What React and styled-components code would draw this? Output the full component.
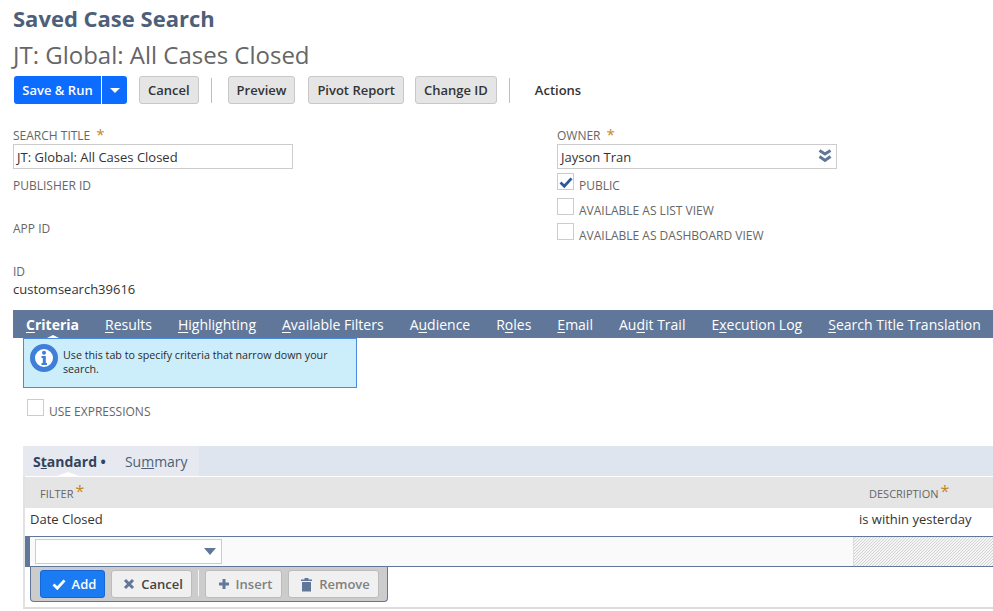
import React from 'react';
import styled, { createGlobalStyle } from 'styled-components';

const Global = createGlobalStyle`
  html, body { margin: 0; padding: 0; background: #fff; overflow: hidden; }
  body { font-family: "Open Sans", "Noto Sans", sans-serif; font-size: 13px; color: #333; }
`;

const Page = styled.div`
  width: 993px;
  height: 611px;
  overflow: hidden;
  padding: 3px 0 0 13px;
  box-sizing: border-box;
`;

const Title = styled.h1`
  margin: 0;
  font-size: 22px;
  line-height: 30px;
  font-weight: 700;
  color: #4d5f79;
`;

const SubTitle = styled.h2`
  margin: 5px 0 0;
  font-size: 24px;
  line-height: 33px;
  font-weight: 400;
  color: #666;
`;

const Toolbar = styled.div`
  display: flex;
  align-items: center;
  height: 28px;
  margin: 5px 0 0 1px;
`;

const PrimaryGroup = styled.div`
  display: flex;
  height: 28px;
  border-radius: 3px;
  overflow: hidden;
  background: #0b6cff;
  color: #fff;
  font-weight: 600;
  margin-right: 12px;
`;

const PrimaryLabel = styled.div`
  width: 88px;
  box-sizing: border-box;
  text-align: center;
  line-height: 28px;
  border-right: 1px solid #fff;
`;

const PrimaryArrow = styled.div`
  width: 25px;
  display: flex;
  align-items: center;
  justify-content: center;
  &::after {
    content: '';
    border: 5px solid transparent;
    border-top: 5px solid #fff;
    border-bottom: 0;
  }
`;

const Button = styled.div`
  height: 26px;
  line-height: 26px;
  padding: 0 8px;
  background: #e5e5e5;
  border: 1px solid #c8c8c8;
  border-radius: 3px;
  font-weight: 600;
  color: #333;
  margin-right: ${p => p.$gap || 12}px;
`;

const Divider = styled.div`
  width: 1px;
  height: 25px;
  background: #bdbdbd;
  margin-right: 16px;
`;

const PlainAction = styled.div`
  font-weight: 600;
  margin-left: 9px;
  color: #333;
`;

const Form = styled.div`
  display: grid;
  grid-template-columns: 544px 280px;
  margin-top: 23px;
`;

const Column = styled.div`
  display: flex;
  flex-direction: column;
`;

const Label = styled.div`
  font-size: 12px;
  line-height: 17px;
  height: 17px;
  color: #666;
  white-space: nowrap;
`;

const FieldLabel = styled(Label)`
  margin-top: 8px;
`;

const Star = styled.span`
  color: #c5861f;
  font-size: 15px;
  line-height: 1;
  margin-left: 6px;
`;

const TextBox = styled.div`
  width: 280px;
  height: 25px;
  box-sizing: border-box;
  border: 1px solid #ccc;
  padding-left: 3px;
  line-height: 25px;
  color: #333;
  position: relative;
`;

const OwnerArrows = styled.svg`
  position: absolute;
  right: 4px;
  top: 4px;
  width: 14px;
  height: 14px;
`;

const FieldBlock = styled.div`
  height: 43px;
`;

const Value = styled.div`
  line-height: 18px;
`;

const CheckRow = styled.div`
  display: flex;
  align-items: flex-start;
  height: 25px;
  gap: 5px;
  ${p => p.$first && 'margin-top: 4px;'}
`;

const Box = styled.div`
  width: 17px;
  height: 17px;
  box-sizing: border-box;
  border: 1px solid #ccc;
  flex: none;
  display: flex;
  align-items: center;
  justify-content: center;
`;

const CheckLabel = styled(Label)`
  margin-top: 4px;
`;

const TabBar = styled.div`
  display: flex;
  height: 28px;
  margin-top: 12px;
  background: #607799;
  padding-left: 13px;
  gap: 26px;
  white-space: nowrap;
`;

const Tab = styled.div`
  position: relative;
  color: #fff;
  font-size: 14px;
  line-height: 29px;
  font-weight: ${p => (p.$active ? 700 : 400)};
  u { text-underline-offset: 2px; }
  ${p => p.$active && `
    &::after {
      content: '';
      position: absolute;
      left: 50%;
      bottom: 0;
      margin-left: -6px;
      border: 6px solid transparent;
      border-top: 0;
      border-bottom: 3px solid #fff;
    }
  `}
`;

const InfoBox = styled.div`
  width: 334px;
  height: 50px;
  box-sizing: border-box;
  margin-left: 10px;
  background: #cceefb;
  border: 1px solid #4a8ae0;
  display: flex;
  padding: 5px 6px;
  gap: 5px;
  font-size: 10.7px;
  line-height: 14px;
  color: #2b2b2b;
`;

const InfoIcon = styled.svg`
  flex: none;
  width: 28px;
  height: 28px;
`;

const InfoText = styled.div`
  margin-top: 4px;
`;

const ExprRow = styled(CheckRow)`
  margin: 11px 0 0 14px;
`;

const Panel = styled.div`
  margin: 22px 0 0 10px;
  border-left: 2px solid #e2e2e2;
  border-bottom: 2px solid #ddd;
  height: 161px;
`;

const SubTabs = styled.div`
  display: flex;
  height: 30px;
  margin-left: -2px;
  background: #dfe5ef;
`;

const SubTab = styled.div`
  position: relative;
  background: #e6e9f0;
  width: 176px;
  display: flex;
  align-items: center;
  padding-left: 10px;
  gap: 19px;
  box-sizing: border-box;
  font-size: 14px;
  line-height: 31px;
  color: #4d5f79;
  b { color: #33435c; }
  &::after {
    content: '';
    position: absolute;
    left: 34px;
    bottom: 0;
    border: 11px solid transparent;
    border-top: 0;
    border-bottom: 4px solid #fff;
  }
`;

const HeadRow = styled.div`
  display: grid;
  grid-template-columns: 828px 1fr;
  height: 31px;
  background: #e5e5e5;
  margin-top: 1px;
  font-size: 11px;
  color: #666;
  line-height: 33px;
`;

const HeadCell = styled.div`
  padding-left: ${p => p.$pad}px;
  white-space: nowrap;
`;

const HeadStar = styled.span`
  color: #c5861f;
  font-size: 16px;
  margin-left: 2px;
  vertical-align: 1px;
  line-height: 1;
`;

const DataRow = styled.div`
  display: grid;
  grid-template-columns: 829px 1fr;
  height: 28px;
  line-height: 22px;
  box-sizing: border-box;
  padding-left: 5px;
  white-space: nowrap;
  color: #333;
`;

const EditRow = styled.div`
  display: grid;
  grid-template-columns: 823px 1fr;
  height: 31px;
  box-sizing: border-box;
  background: #fafafa;
  border-top: 1px solid #607799;
  border-bottom: 1px solid #607799;
  border-left: 5px solid #607799;
`;

const EditCell = styled.div`
  padding: 2px 0 0 5px;
`;

const Hatch = styled.div`
  border-left: 1px solid #ddd;
  background-image: linear-gradient(135deg, #f5f5f5 25%, #d2d2d2 25% 50%, #f5f5f5 50% 75%, #d2d2d2 75%);
  background-size: 3px 3px;
`;

const Select = styled.div`
  position: relative;
  width: 187px;
  height: 25px;
  box-sizing: border-box;
  background: #fff;
  border: 1px solid #ccc;
  &::after {
    content: '';
    position: absolute;
    right: 5px;
    top: 8px;
    border: 6px solid transparent;
    border-top: 7px solid #607799;
    border-bottom: 0;
  }
`;

const ActionBar = styled.div`
  display: flex;
  align-items: flex-start;
  width: 358px;
  height: 35px;
  box-sizing: border-box;
  margin-left: 5px;
  background: #ccc;
  border: 1px solid #607799;
  border-top: 0;
  border-radius: 0 0 4px 4px;
  padding: 3px 0 0 9px;
  gap: 6px;
`;

const RowButton = styled.div`
  display: flex;
  align-items: center;
  justify-content: center;
  gap: 6px;
  width: ${p => p.$w}px;
  height: 28px;
  padding-left: 3px;
  box-sizing: border-box;
  border-radius: 3px;
  font-weight: 600;
  border: 1px solid ${p => (p.$primary ? '#1467d8' : '#bbb')};
  background: ${p => (p.$primary ? '#1a7bf2' : '#f0f0f0')};
  color: ${p => (p.$primary ? '#fff' : p.$muted ? '#808080' : '#444')};
`;

const BarDivider = styled.div`
  width: 1px;
  height: 26px;
  background: #f4f4f4;
`;

const Check = ({ color, size = 14 }) => (
  <svg width={size} height={size} viewBox="0 0 14 14">
    <path d="M1.5 7.5 L5.3 11.2 L12.5 3.4" fill="none" stroke={color} strokeWidth="2.8" />
  </svg>
);

const tabs = [
  ['', 'C', 'riteria'],
  ['', 'R', 'esults'],
  ['', 'H', 'ighlighting'],
  ['', 'A', 'vailable Filters'],
  ['A', 'u', 'dience'],
  ['R', 'o', 'les'],
  ['', 'E', 'mail'],
  ['Au', 'd', 'it Trail'],
  ['E', 'x', 'ecution Log'],
  ['', 'S', 'earch Title Translation'],
];

export default function App() {
  return (
    <Page>
      <Global />
      <Title>Saved Case Search</Title>
      <SubTitle>JT: Global: All Cases Closed</SubTitle>
      <Toolbar>
        <PrimaryGroup>
          <PrimaryLabel>Save &amp; Run</PrimaryLabel>
          <PrimaryArrow />
        </PrimaryGroup>
        <Button>Cancel</Button>
        <Divider />
        <Button $gap={13}>Preview</Button>
        <Button $gap={11}>Pivot Report</Button>
        <Button>Change ID</Button>
        <Divider />
        <PlainAction>Actions</PlainAction>
      </Toolbar>

      <Form>
        <Column>
          <Label>SEARCH TITLE<Star>*</Star></Label>
          <TextBox>JT: Global: All Cases Closed</TextBox>
          <FieldBlock>
            <FieldLabel>PUBLISHER ID</FieldLabel>
          </FieldBlock>
          <FieldBlock>
            <FieldLabel>APP ID</FieldLabel>
          </FieldBlock>
          <FieldLabel>ID</FieldLabel>
          <Value>customsearch39616</Value>
        </Column>
        <Column>
          <Label>OWNER<Star>*</Star></Label>
          <TextBox>
            Jayson Tran
            <OwnerArrows viewBox="0 0 14 14">
              <path d="M1.5 1.5 L7 5 L12.5 1.5 M1.5 7.5 L7 11.5 L12.5 7.5" fill="none" stroke="#607799" strokeWidth="3" />
            </OwnerArrows>
          </TextBox>
          <CheckRow $first>
            <Box><Check color="#2a5a9e" /></Box>
            <CheckLabel>PUBLIC</CheckLabel>
          </CheckRow>
          <CheckRow>
            <Box />
            <CheckLabel>AVAILABLE AS LIST VIEW</CheckLabel>
          </CheckRow>
          <CheckRow>
            <Box />
            <CheckLabel>AVAILABLE AS DASHBOARD VIEW</CheckLabel>
          </CheckRow>
        </Column>
      </Form>

      <TabBar>
        {tabs.map(([pre, key, rest], i) => (
          <Tab key={key + rest} $active={i === 0}>{pre}<u>{key}</u>{rest}</Tab>
        ))}
      </TabBar>
      <InfoBox>
        <InfoIcon viewBox="0 0 28 28">
          <circle cx="14" cy="14" r="11.5" fill="#fff" stroke="#3f7fd9" strokeWidth="5" />
          <circle cx="14" cy="8.8" r="2" fill="#3f7fd9" />
          <path d="M11.5 12 H15.8 V19 H17 V21 H11.5 V19 H12.8 V14 H11.5 Z" fill="#3f7fd9" />
        </InfoIcon>
        <InfoText>Use this tab to specify criteria that narrow down your search.</InfoText>
      </InfoBox>
      <ExprRow>
        <Box />
        <CheckLabel>USE EXPRESSIONS</CheckLabel>
      </ExprRow>

      <Panel>
        <SubTabs>
          <SubTab>
            <b>S<u>t</u>andard •</b>
            <span>Su<u>m</u>mary</span>
          </SubTab>
        </SubTabs>
        <HeadRow>
          <HeadCell $pad={15}>FILTER<HeadStar>*</HeadStar></HeadCell>
          <HeadCell $pad={16}>DESCRIPTION<HeadStar>*</HeadStar></HeadCell>
        </HeadRow>
        <DataRow>
          <div>Date Closed</div>
          <div>is within yesterday</div>
        </DataRow>
        <EditRow>
          <EditCell><Select /></EditCell>
          <Hatch />
        </EditRow>
        <ActionBar>
          <RowButton $w={65} $primary><Check color="#fff" />Add</RowButton>
          <RowButton $w={81}>
            <svg width="12" height="12" viewBox="0 0 12 12">
              <path d="M2 2 L10 10 M10 2 L2 10" stroke="#607799" strokeWidth="3" />
            </svg>
            Cancel
          </RowButton>
          <BarDivider />
          <RowButton $w={77} $muted>
            <svg width="12" height="12" viewBox="0 0 12 12">
              <path d="M6 1 V11 M1 6 H11" stroke="#607799" strokeWidth="3" />
            </svg>
            Insert
          </RowButton>
          <RowButton $w={91} $muted>
            <svg width="13" height="15" viewBox="0 0 13 15">
              <path d="M1 2.5 H12 V4 H1 Z M4.5 2.5 V1 H8.5 V2.5 Z M2 5 H11 V14.5 H2 Z" fill="#607799" />
            </svg>
            Remove
          </RowButton>
        </ActionBar>
      </Panel>
    </Page>
  );
}
